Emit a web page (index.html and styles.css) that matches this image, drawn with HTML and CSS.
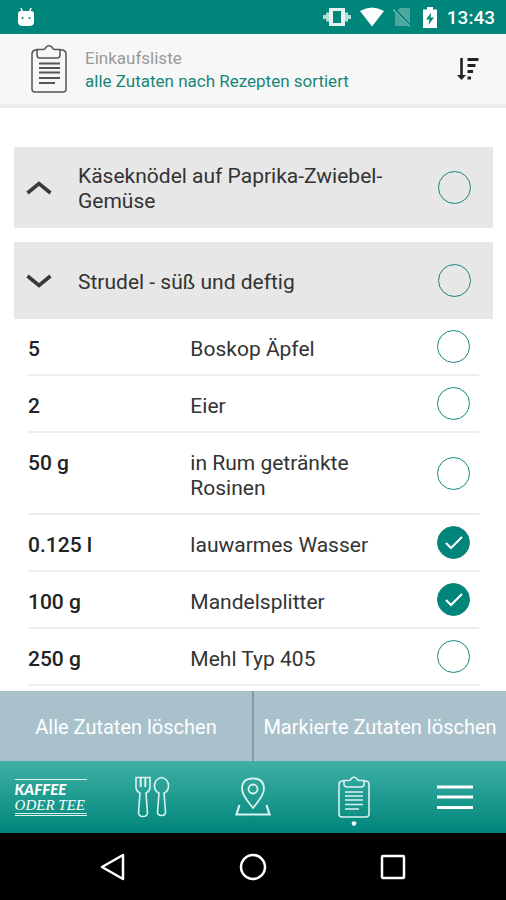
FILE: index.html
```
<!DOCTYPE html>
<html lang="de">
<head>
    <meta charset="UTF-8">
    <meta name="viewport" content="width=device-width, initial-scale=1.0">
    <title>Einkaufsliste</title>
    <link rel="stylesheet" href="styles.css">
</head>
<body>
    <!-- Status bar -->
    <div class="status-bar">
        <svg class="status-app" width="18" height="20" viewBox="0 0 18 20">
            <path d="M4 1l1.500 4M14 1l-1.500 4" stroke="#fff" stroke-width="1.500"/>
            <path d="M1 6.500Q1 4 4 4H14Q17 4 17 6.500V15Q17 19 12 19H6Q1 19 1 15Z" fill="#fff"/>
            <circle cx="5.500" cy="11" r="1" fill="#00857a"/>
            <circle cx="12.500" cy="11" r="1" fill="#00857a"/>
        </svg>
        <svg width="28" height="20" viewBox="0 0 28 20">
            <path d="M1.500 8v4M4.500 5.500v9M23.500 5.500v9M26.500 8v4" stroke="#b5dcd8" stroke-width="3"/>
            <path d="M6 1h16v18h-16z" fill="#e3f3f1"/>
            <path d="M10 4h8v12h-8z" fill="#00857a"/>
        </svg>
        <svg width="26" height="20" viewBox="0 0 26 20">
            <path d="M1 4Q13-3 25 4L13 19.500Z" fill="#fff"/>
        </svg>
        <svg width="18" height="20" viewBox="0 0 18 20">
            <path d="M7 1h10v18H2V6z" fill="#4da8a0"/>
            <path d="M0 1l18 19" stroke="#00857a" stroke-width="3"/>
            <path d="M0 2.500l17 17" stroke="#6bb8b1" stroke-width="1.500"/>
        </svg>
        <svg class="status-battery" width="14" height="21" viewBox="0 0 14 21">
            <path d="M0 2.500h4V0h6v2.500h4V21H0z" fill="#fff"/>
            <path d="M8 5.500L3 12.500h3.500L5.500 18l5.500-7.500H7.500z" fill="#00857a"/>
        </svg>
        <span class="clock">13:43</span>
    </div>

    <!-- Header -->
    <header class="header">
        <svg width="36" height="48" viewBox="0 0 36 48" fill="none" stroke="#555">
            <path d="M7 5H4Q1 6 1 9V44Q1 47 4 47H32Q35 47 35 44V9Q35 6 32 5H29" stroke-width="1.500"/>
            <path d="M6 4.500H12Q14 4.500 14.500 3Q16 .5 18 .8Q20 .5 21.500 3Q22 4.500 24 4.500H29V10Q29 13 26 13H9Q6 13 6 10Z" stroke-width="1.500"/>
            <path d="M8 18.500H29M8 23H29M8 27.500H29M8 33H29M8 38H24" stroke-width="1.800"/>
        </svg>
        <div class="header-text">
            <h1>Einkaufsliste</h1>
            <p>alle Zutaten nach Rezepten sortiert</p>
        </div>
        <button class="sort-button" aria-label="Sortieren">
            <svg width="22" height="22" viewBox="0 0 22 22" fill="none" stroke="#222">
                <path d="M4.500 0V20" stroke-width="2.600"/>
                <path d="M0 17h9l-4.500 5z" fill="#222" stroke="none"/>
                <path d="M10.500 1.500h11M10.500 7.500h8M10.500 13.500h5.500M10.500 20h3.500" stroke-width="2.800"/>
            </svg>
        </button>
    </header>

    <!-- Shopping list -->
    <main class="list">
        <section class="recipe">
            <button class="recipe-toggle" aria-expanded="false">
                <svg width="26" height="14" viewBox="0 0 26 14">
                    <path d="M1.500 12L13 2.500L24.500 12" fill="none" stroke="#3a3a3a" stroke-width="3.600"/>
                </svg>
                <span>Käseknödel auf Paprika-Zwiebel-Gemüse</span>
            </button>
            <input type="checkbox" class="check" aria-label="Käseknödel auf Paprika-Zwiebel-Gemüse">
        </section>

        <section class="recipe">
            <button class="recipe-toggle" aria-expanded="true">
                <svg width="26" height="14" viewBox="0 0 26 14">
                    <path d="M1.500 2L13 11.500L24.500 2" fill="none" stroke="#3a3a3a" stroke-width="3.600"/>
                </svg>
                <span>Strudel - süß und deftig</span>
            </button>
            <input type="checkbox" class="check" aria-label="Strudel - süß und deftig">
        </section>

        <table class="ingredients">
            <tbody>
                <tr>
                    <td class="amount">5</td>
                    <td><label for="item1">Boskop Äpfel</label></td>
                    <td class="mark"><input type="checkbox" class="check" id="item1"></td>
                </tr>
                <tr>
                    <td class="amount">2</td>
                    <td><label for="item2">Eier</label></td>
                    <td class="mark"><input type="checkbox" class="check" id="item2"></td>
                </tr>
                <tr>
                    <td class="amount">50 g</td>
                    <td><label for="item3">in Rum getränkte Rosinen</label></td>
                    <td class="mark"><input type="checkbox" class="check" id="item3"></td>
                </tr>
                <tr>
                    <td class="amount">0.125 l</td>
                    <td><label for="item4">lauwarmes Wasser</label></td>
                    <td class="mark"><input type="checkbox" class="check" id="item4" checked></td>
                </tr>
                <tr>
                    <td class="amount">100 g</td>
                    <td><label for="item5">Mandelsplitter</label></td>
                    <td class="mark"><input type="checkbox" class="check" id="item5" checked></td>
                </tr>
                <tr>
                    <td class="amount">250 g</td>
                    <td><label for="item6">Mehl Typ 405</label></td>
                    <td class="mark"><input type="checkbox" class="check" id="item6"></td>
                </tr>
            </tbody>
        </table>
    </main>

    <!-- Delete buttons -->
    <div class="actions">
        <button>Alle Zutaten löschen</button>
        <button>Markierte Zutaten löschen</button>
    </div>

    <!-- Tab bar -->
    <nav class="tabs">
        <a href="#"><span class="logo-box"><b>KAFFEE</b><i>ODER TEE</i></span></a>
        <a href="#" aria-label="Rezepte">
            <svg width="36" height="42" viewBox="0 0 36 42" fill="none" stroke="#d9f3ef" stroke-width="1.600">
                <path d="M2 1.500H16V11Q16 15 12 17L13.500 37Q13 40.500 9 40.500T4.500 37L6 17Q2 15 2 11Z"/>
                <path d="M6.700 1.500V11M11.300 1.500V11" stroke-width="2"/>
                <path d="M27.500 1.500Q34.500 3 34.500 10Q34.500 15 30 17L31.500 36Q31.500 39.500 27.500 39.500T23.500 36L25 17Q20.500 15 20.500 10Q20.500 3 27.500 1.500Z"/>
            </svg>
        </a>
        <a href="#" aria-label="Karte">
            <svg width="36" height="40" viewBox="0 0 36 40" fill="none" stroke="#d9f3ef" stroke-width="1.800">
                <path d="M18 31Q7 18 7 12Q7 1.500 18 1.500T29 12Q29 18 18 31Z"/>
                <circle cx="18" cy="12" r="4.500"/>
                <path d="M4.500 28L1.500 37.500H34.500L31.500 28" stroke-width="2.200"/>
            </svg>
        </a>
        <a href="#" class="active" aria-label="Einkaufsliste">
            <svg width="32" height="50" viewBox="0 0 32 50" fill="none" stroke="#d9f3ef" stroke-width="1.600">
                <path d="M6 5H4Q1 5.500 1 8V38Q1 41 4 41H28Q31 41 31 38V8Q31 5.500 28 5H26"/>
                <path d="M6 4.500H11Q12.500 4.500 13 3Q14.500 1 16 1.200Q17.500 1 19 3Q19.500 4.500 21 4.500H26V8Q26 11 23 11H9Q6 11 6 8Z"/>
                <path d="M7 16H25M7 20H25M7 24H25M7 28.500H25M7 33H21"/>
                <circle cx="16" cy="47.500" r="2.300" fill="#fff" stroke="none"/>
            </svg>
        </a>
        <a href="#" aria-label="Menü">
            <svg width="36" height="26" viewBox="0 0 36 26">
                <path d="M0 3H36M0 13H36M0 23.500H36" stroke="#fff" stroke-width="3"/>
            </svg>
        </a>
    </nav>

    <!-- System navigation -->
    <div class="system-nav">
        <button aria-label="Zurück">
            <svg width="28" height="28" viewBox="0 0 28 28"><path d="M24 2V26L3 14Z" fill="none" stroke="#fff" stroke-width="2.500" stroke-linejoin="round"/></svg>
        </button>
        <button aria-label="Startseite">
            <svg width="28" height="28" viewBox="0 0 28 28"><circle cx="14" cy="14" r="12" fill="none" stroke="#fff" stroke-width="2.500"/></svg>
        </button>
        <button aria-label="Übersicht">
            <svg width="28" height="28" viewBox="0 0 28 28"><rect x="3" y="3" width="22" height="22" rx="1" fill="none" stroke="#fff" stroke-width="2.500"/></svg>
        </button>
    </div>
</body>
</html>
```
FILE: styles.css
```
* {
    box-sizing: border-box;
}

body {
    margin: 0;
    height: 100vh;
    display: flex;
    flex-direction: column;
    font-family: Roboto, sans-serif;
    font-size: 21px;
    line-height: 25px;
    color: #333;
    background-color: #fff;
}

button {
    padding: 0;
    border: none;
    background: none;
    font: inherit;
    color: inherit;
    cursor: pointer;
}

svg {
    display: block;
    flex-shrink: 0;
}

.status-bar {
    display: flex;
    align-items: center;
    gap: 8px;
    height: 34px;
    padding: 0 11px 0 17px;
    background-color: #00857a;
    color: #fff;
}

.status-app {
    margin-right: auto;
}

.status-battery {
    margin: 0 2px 0 4px;
}

.clock {
    font-size: 19px;
    font-weight: 500;
}

.header {
    display: flex;
    align-items: center;
    height: 74px;
    padding: 0 27px 0 31px;
    background-color: #f7f7f7;
    border-bottom: 4px solid #ececec;
}

.header-text {
    flex: 1;
    margin-left: 18px;
    padding-top: 2px;
    font-size: 17px;
    line-height: 23px;
}

.header h1 {
    margin: 0;
    font-size: 17px;
    font-weight: 400;
    color: #999;
}

.header p {
    margin: 0;
    color: #198579;
}

.list {
    flex: 1;
    min-height: 0;
    overflow-y: auto;
    padding: 39px 13px 0 14px;
}

.recipe {
    display: flex;
    align-items: center;
    min-height: 77px;
    padding: 14px 22px 14px 12px;
    background-color: #e7e7e7;
}

.recipe + .recipe {
    margin-top: 14px;
}

.recipe-toggle {
    flex: 1;
    display: flex;
    align-items: center;
    gap: 26px;
    padding-right: 40px;
    text-align: left;
}

.recipe-toggle span {
    padding-top: 3px;
}

.check {
    appearance: none;
    flex-shrink: 0;
    display: block;
    width: 33px;
    height: 33px;
    margin: 0;
    border: 1px solid #16857a;
    border-radius: 50%;
    cursor: pointer;
}

.check:checked {
    background: #00857a url("data:image/svg+xml,%3Csvg xmlns='http://www.w3.org/2000/svg' viewBox='0 0 31 31'%3E%3Cpath d='M8 16l5 5L24 10' fill='none' stroke='white' stroke-width='2.200'/%3E%3C/svg%3E") center no-repeat;
}

.ingredients {
    width: calc(100% - 28px);
    margin: 0 14px;
    border-collapse: separate;
    border-spacing: 0;
    table-layout: fixed;
}

.ingredients td {
    padding: 18px 0 12px;
    border-bottom: 2px solid #ededed;
    vertical-align: top;
}

.ingredients .amount {
    width: 36%;
    font-weight: 500;
    color: #222;
}

.ingredients label {
    display: block;
    padding-right: 20px;
}

.ingredients .mark {
    width: 42px;
    padding: 0;
    vertical-align: middle;
}

.actions {
    display: flex;
    height: 70px;
    background-color: #a8c1cb;
}

.actions button {
    flex: 1;
    padding-top: 2px;
    font-size: 20px;
    color: #fff;
    white-space: nowrap;
}

.actions button + button {
    border-left: 2px solid #829ca6;
}

.tabs {
    display: grid;
    grid-template-columns: repeat(5, 1fr);
    height: 72px;
    background: linear-gradient(#3fb0a5, #00857a);
}

.tabs a {
    display: flex;
    align-items: center;
    justify-content: center;
    color: #fff;
    text-decoration: none;
}

.tabs .active {
    padding-top: 8px;
}

.logo-box {
    display: flex;
    flex-direction: column;
    width: 72px;
    border-top: 1px solid #d9f3ef;
    border-bottom: 3px double #d9f3ef;
    font-size: 15px;
    line-height: 16px;
    white-space: nowrap;
}

.logo-box b {
    padding-top: 1px;
    font-family: Lato, sans-serif;
    font-weight: 900;
    font-style: italic;
}

.logo-box i {
    font-family: "Liberation Serif", serif;
}

.system-nav {
    display: flex;
    align-items: center;
    justify-content: center;
    gap: 112px;
    height: 67px;
    background-color: #000;
}
```
